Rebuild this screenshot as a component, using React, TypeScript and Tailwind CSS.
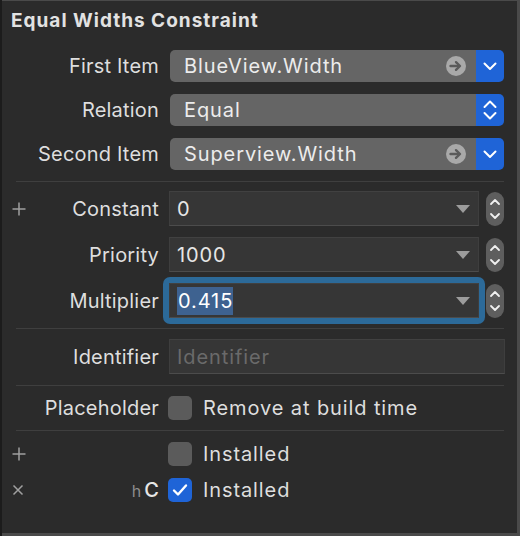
import React from "react";

const ArrowCircle = () => (
  <svg width="20" height="20" viewBox="0 0 20 20">
    <circle cx="10" cy="10" r="10" fill="#a9a9a9" />
    <path d="M4.5 10 H13" stroke="#5b5b5b" strokeWidth="2.4" strokeLinecap="round" />
    <path d="M10 6.2 L14 10 L10 13.8" stroke="#5b5b5b" strokeWidth="2.4" fill="none" strokeLinecap="round" strokeLinejoin="round" />
  </svg>
);

const ChevDown = () => (
  <svg width="14" height="9" viewBox="0 0 14 9">
    <path d="M1.5 1.5 L7 7 L12.5 1.5" stroke="#fff" strokeWidth="2" fill="none" strokeLinecap="round" strokeLinejoin="round" />
  </svg>
);

const ChevUpDown = () => (
  <svg width="14" height="22" viewBox="0 0 14 22">
    <path d="M1.5 8 L7 2.5 L12.5 8" stroke="#fff" strokeWidth="2" fill="none" strokeLinecap="round" strokeLinejoin="round" />
    <path d="M1.5 14 L7 19.5 L12.5 14" stroke="#fff" strokeWidth="2" fill="none" strokeLinecap="round" strokeLinejoin="round" />
  </svg>
);

const Stepper = () => (
  <div className="ml-[7px] w-[18px] h-[34px] rounded-full bg-[#5e5e5e] flex items-center justify-center">
    <svg width="12" height="26" viewBox="0 0 12 26">
      <path d="M2 8 L6 4 L10 8" stroke="#f0f0f0" strokeWidth="1.8" fill="none" strokeLinecap="round" strokeLinejoin="round" />
      <path d="M2 18 L6 22 L10 18" stroke="#f0f0f0" strokeWidth="1.8" fill="none" strokeLinecap="round" strokeLinejoin="round" />
    </svg>
  </div>
);

const Triangle = () => (
  <svg width="14" height="8" viewBox="0 0 14 8">
    <path d="M0 0 H14 L7 8 Z" fill="#9c9c9c" />
  </svg>
);

const Label = ({ children, left }: { children?: React.ReactNode; left?: React.ReactNode }) => (
  <div className="w-[157px] flex items-center justify-between shrink-0">
    <div className="pl-[10px] flex items-center">{left}</div>
    <div className="text-[20px] tracking-[0.2px] text-[#dedede] leading-none whitespace-nowrap">{children}</div>
  </div>
);

const Plus = () => (
  <svg width="14" height="14" viewBox="0 0 14 14">
    <path d="M7 0.5 V13.5 M0.5 7 H13.5" stroke="#a0a0a0" strokeWidth="1.5" />
  </svg>
);

const Cross = () => (
  <svg width="12" height="12" viewBox="0 0 12 12">
    <path d="M1.5 1.5 L10.5 10.5 M10.5 1.5 L1.5 10.5" stroke="#a0a0a0" strokeWidth="1.5" />
  </svg>
);

const Popup = ({ text, icon, updown }: { text: string; icon?: boolean; updown?: boolean }) => (
  <div className="ml-[11px] w-[334px] h-[32px] flex rounded-[5px] overflow-hidden">
    <div className="flex-1 bg-[#656565] flex items-center pl-[14px] pr-[10px]">
      <span className="flex-1 text-[20px] tracking-[0.9px] text-[#ececec] leading-none">{text}</span>
      {icon && <ArrowCircle />}
    </div>
    <div className="w-[28px] bg-[#1f64d7] flex items-center justify-center">
      {updown ? <ChevUpDown /> : <ChevDown />}
    </div>
  </div>
);

const Field = ({ children, w = "w-[310px]", noTri }: { children?: React.ReactNode; w?: string; noTri?: boolean }) => (
  <div className={`${w} h-[35px] bg-[#363636] border-t border-t-[#414141] border-b border-b-[#4c4c4c] border-x border-x-[#3e3e3e] flex items-center pl-[7px] pr-[8px]`}>
    <div className="flex-1 flex items-center text-[20px] tracking-[0.9px] leading-none text-[#e6e6e6]">{children}</div>
    {!noTri && <Triangle />}
  </div>
);

const Sep = ({ mt }: { mt: string }) => <div className={`${mt} ml-[14px] w-[488px] h-px bg-[#3f3f3f]`} />;

const Checkbox = ({ checked }: { checked?: boolean }) => (
  <div className={`ml-[9px] w-[24px] h-[24px] rounded-[5px] flex items-center justify-center ${checked ? "bg-[#1f64d7]" : "bg-[#5b5b5b]"}`}>
    {checked && (
      <svg width="16" height="14" viewBox="0 0 16 14">
        <path d="M2 7.5 L6 11.5 L14 2.5" stroke="#fff" strokeWidth="2.4" fill="none" strokeLinecap="round" strokeLinejoin="round" />
      </svg>
    )}
  </div>
);

export default function App() {
  return (
    <div className="w-[520px] h-[536px] flex bg-[#4a4a4a] font-['Inter',sans-serif] overflow-hidden">
      <div className="w-[2px] h-full bg-[#1c1c1c]" />
      <div className="flex-1 mt-px mr-[3px] mb-[3px] bg-[#2b2b2b] flex flex-col">
        <div className="mt-[9px] ml-[9px] text-[19px] tracking-[1px] leading-[22px] font-bold text-[#e2e2e2]">Equal Widths Constraint</div>

        <div className="mt-[18px] flex items-center h-[32px]">
          <Label>First Item</Label>
          <Popup text="BlueView.Width" icon />
        </div>
        <div className="mt-[12px] flex items-center h-[32px]">
          <Label>Relation</Label>
          <Popup text="Equal" updown />
        </div>
        <div className="mt-[12px] flex items-center h-[32px]">
          <Label>Second Item</Label>
          <Popup text="Superview.Width" icon />
        </div>

        <Sep mt="mt-[11px]" />

        <div className="mt-[9px] flex items-center h-[35px]">
          <Label left={<Plus />}>Constant</Label>
          <div className="ml-[10px]"><Field>0</Field></div>
          <Stepper />
        </div>
        <div className="mt-[11px] flex items-center h-[35px]">
          <Label>Priority</Label>
          <div className="ml-[10px]"><Field>1000</Field></div>
          <Stepper />
        </div>
        <div className="mt-[11px] flex items-center h-[35px]">
          <Label>Multiplier</Label>
          <div className="ml-[4px] -my-[6px] p-[6px] rounded-[7px] bg-[#2c6a99]">
            <Field>
              <span className="inline-block h-[28px] leading-[28px] bg-[#3e6290] text-white pl-[1px]">0.415</span>
            </Field>
          </div>
          <div className="-ml-[6px] flex"><Stepper /></div>
        </div>

        <Sep mt="mt-[10px]" />

        <div className="mt-[10px] flex items-center h-[35px]">
          <Label>Identifier</Label>
          <div className="ml-[10px]">
            <Field w="w-[336px]" noTri>
              <span className="text-[#6a6a6a]">Identifier</span>
            </Field>
          </div>
        </div>

        <Sep mt="mt-[11px]" />

        <div className="mt-[10px] flex items-center h-[24px]">
          <Label>Placeholder</Label>
          <Checkbox />
          <span className="ml-[11px] text-[20px] tracking-[0.9px] leading-none text-[#dedede]">Remove at build time</span>
        </div>

        <Sep mt="mt-[10px]" />

        <div className="mt-[11px] flex items-center h-[24px]">
          <Label left={<Plus />} />
          <Checkbox />
          <span className="ml-[11px] text-[20px] tracking-[0.9px] leading-none text-[#dedede]">Installed</span>
        </div>
        <div className="mt-[12px] flex items-center h-[24px]">
          <Label left={<Cross />}>
            <span className="text-[16px] tracking-normal text-[#8c8c8c] mr-[3px]">h</span>
            <span className="text-[20px] tracking-normal font-medium text-[#e6e6e6]">C</span>
          </Label>
          <Checkbox checked />
          <span className="ml-[11px] text-[20px] tracking-[0.9px] leading-none text-[#dedede]">Installed</span>
        </div>
      </div>
    </div>
  );
}
